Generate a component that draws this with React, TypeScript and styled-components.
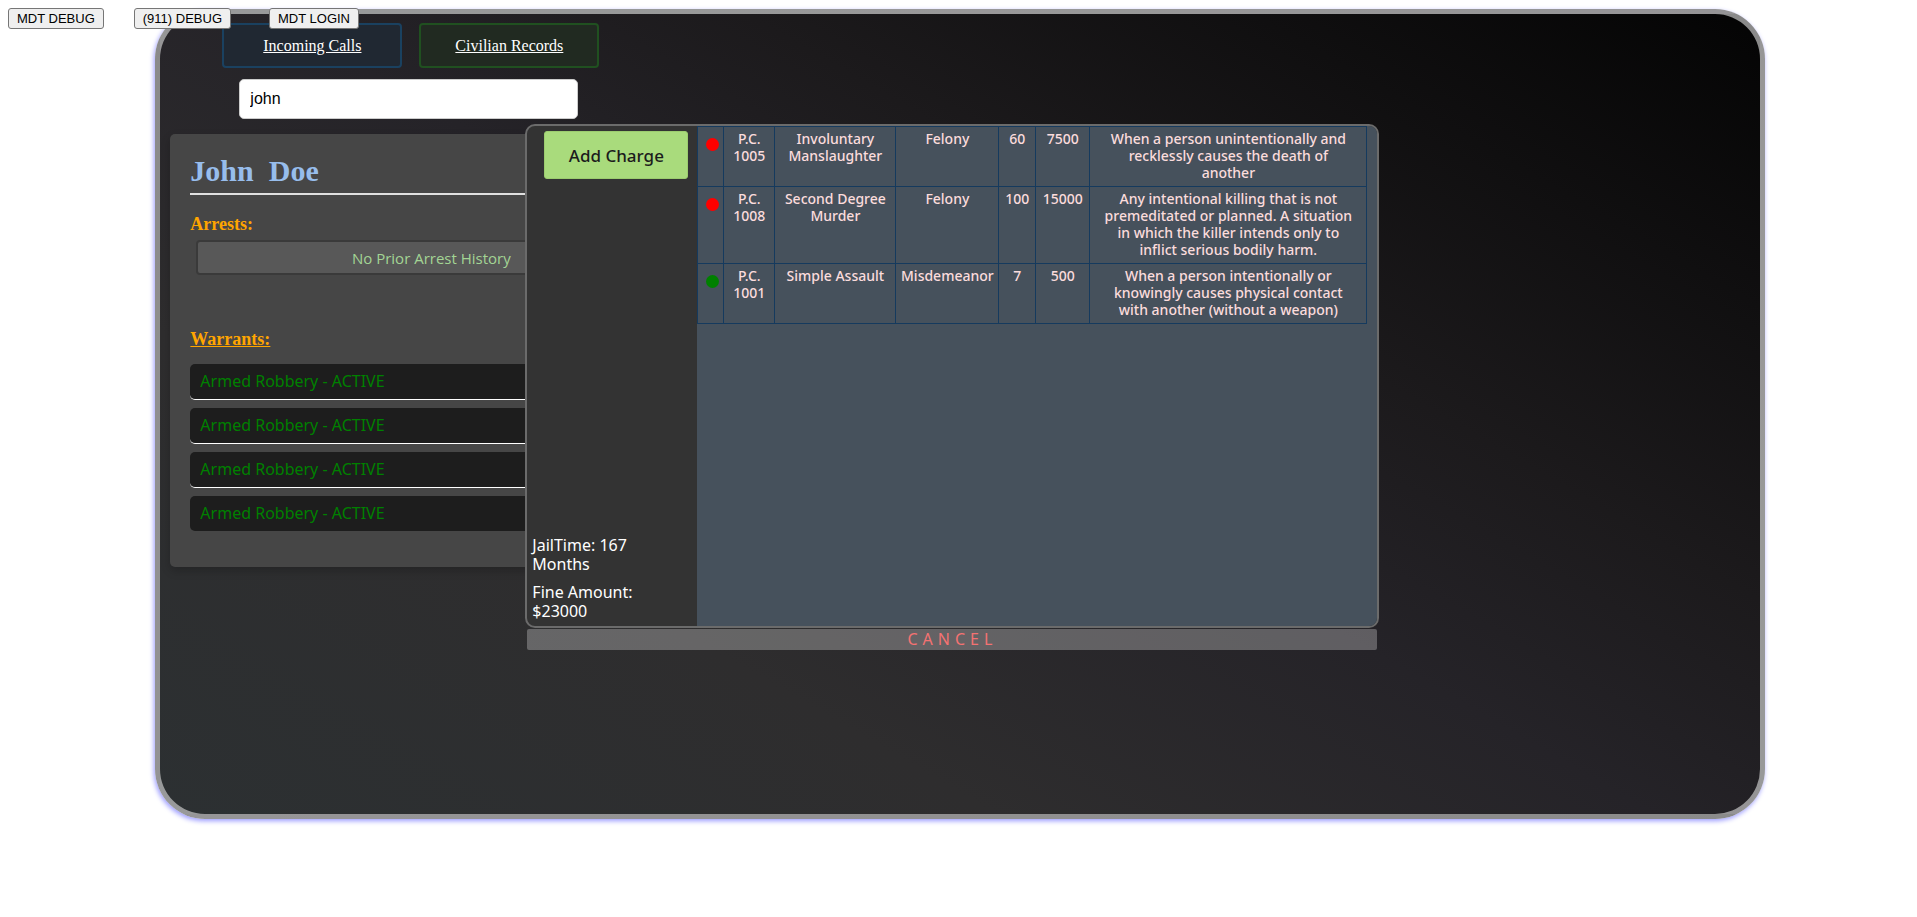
import React from 'react';
import styled, { createGlobalStyle } from 'styled-components';

const ui = `'Noto Sans', sans-serif`;
const serif = `'Liberation Serif', 'Times New Roman', serif`;
const arial = `'Liberation Sans', Arial, sans-serif`;

const GlobalStyle = createGlobalStyle`
  *, *::before, *::after { box-sizing: border-box; }
  html, body, #root { height: 100%; }
  body { margin: 0; background: #fff; font-family: ${serif}; }
`;

const Page = styled.div`
  position: relative;
  min-height: 100%;
  padding: 9px calc(8% - 1px) 0 calc(8% + 2px);
`;

const DebugBar = styled.nav`
  position: absolute;
  z-index: 3;
  top: 8px;
  left: 8px;
  display: flex;
  gap: 30px;
`;

const DebugButton = styled.button`
  height: 21px;
  padding: 0 8px;
  border: 1px solid #767676;
  border-radius: 3px;
  background: #efefef;
  color: #000;
  font: 13px/19px ${arial};
  white-space: nowrap;
  &:last-child { margin-left: 8px; }
`;

const Tablet = styled.main`
  position: relative;
  height: 810px;
  padding: 9px 10px;
  border: 5px solid rgba(211, 211, 211, 0.65);
  border-radius: 50px;
  background: linear-gradient(30deg, #2c3032 0%, #2e2d2e 28%, #252328 50%, #1c1a1c 66%, #040404 100%);
  box-shadow: -1px 2px 5px rgba(0, 0, 255, 0.4);
`;

const Tabs = styled.nav`
  display: flex;
  gap: 17px;
  margin-left: 52px;
`;

const Tab = styled.a<{ $border: string; $fill: string }>`
  width: 180px;
  height: 45px;
  padding-top: 12px;
  border: 2px solid ${p => p.$border};
  border-radius: 4px;
  background: ${p => p.$fill};
  color: #fff;
  font: 16px/18px ${serif};
  text-align: center;
  text-decoration: underline;
`;

const Search = styled.input`
  display: block;
  width: 339px;
  height: 40px;
  margin: 11px 0 15px 69px;
  padding: 0 10px;
  border: 1px solid #ccc;
  border-radius: 5px;
  background: #fff;
  color: #000;
  font: 16px ${arial};
`;

const Record = styled.section`
  width: 522px;
  padding: 20px 20px 36px;
  border-radius: 5px;
  background: #464646;
  box-shadow: 0 4px 10px rgba(0, 0, 0, 0.2);
`;

const Name = styled.h2`
  margin: 0 0 19px;
  padding-bottom: 5px;
  border-bottom: 2px solid #e0e0e0;
  color: #97bdec;
  font: bold 30px/34px ${serif};
  white-space: pre;
`;

const Heading = styled.h3<{ $underline?: boolean }>`
  margin: 0;
  color: orange;
  font: bold 18px/20px ${serif};
  text-decoration: ${p => (p.$underline ? 'underline' : 'none')};
`;

const NoHistory = styled.p`
  height: 35px;
  margin: 6px 6px 54px;
  padding: 6px 0;
  border: 2px solid #3a3a3a;
  border-radius: 4px;
  background: #585858;
  color: #a3d494;
  font: 15px/21px 'Segoe UI', 'Open Sans', sans-serif;
  text-align: center;
`;

const Warrants = styled.ul`
  display: flex;
  flex-direction: column;
  gap: 8px;
  margin: 15px 0 0;
  padding: 0;
  list-style: none;
`;

const Warrant = styled.li`
  padding: 7px 10px;
  border-bottom: 1px solid #fff;
  border-radius: 5px;
  background: #1d1d1d;
  color: green;
  font: 16px/21px ${ui};
  &:last-child { border-bottom: 0; }
`;

const Dialog = styled.div`
  position: absolute;
  z-index: 2;
  top: 110px;
  left: 365px;
  width: 854px;
`;

const Panel = styled.div`
  display: flex;
  height: 504px;
  border: 2px solid #6b6b6b;
  border-radius: 10px;
  background: #333;
  overflow: hidden;
`;

const Side = styled.aside`
  display: flex;
  flex-direction: column;
  align-items: center;
  width: 170px;
  padding: 5px;
`;

const AddButton = styled.button`
  width: 144px;
  height: 48px;
  margin-bottom: auto;
  margin-left: 8px;
  border: 1px solid #9ccc6f;
  border-radius: 3px;
  background: #a9db7c;
  color: #1c1c1c;
  font: 500 17px ${ui};
`;

const Total = styled.p`
  align-self: flex-start;
  width: 120px;
  margin: 9px 0 0;
  color: #fff;
  font: 16px/19px ${ui};
`;

const Charges = styled.div`
  flex: 1;
  padding-right: 10px;
  background: #46515c;
`;

const Table = styled.table`
  width: 100%;
  table-layout: fixed;
  border-collapse: collapse;
  color: #fbdcdc;
  font: 500 14px/17px ${ui};
  text-align: center;
`;

const Cell = styled.td<{ $wide?: boolean }>`
  padding: 3px ${p => (p.$wide ? 12 : 2)}px 5px;
  border: 1px solid #153a5e;
  vertical-align: top;
`;

const Dot = styled.span<{ $color: string }>`
  display: block;
  width: 13px;
  height: 13px;
  margin: 8px 2px 0 auto;
  border-radius: 50%;
  background: ${p => p.$color};
`;

const Cancel = styled.button`
  display: block;
  width: 850px;
  height: 21px;
  margin: 1px auto 0;
  padding: 0 0 1px;
  border: 0;
  border-radius: 2px;
  background: rgba(255, 255, 255, 0.27);
  color: #f47272;
  font: 16px/20px ${ui};
  letter-spacing: 5px;
`;

const charges = [
  { color: 'red', code: 'P.C. 1005', name: 'Involuntary Manslaughter', kind: 'Felony', time: 60, fine: 7500, text: 'When a person unintentionally and recklessly causes the death of another' },
  { color: 'red', code: 'P.C. 1008', name: 'Second Degree Murder', kind: 'Felony', time: 100, fine: 15000, text: 'Any intentional killing that is not premeditated or planned. A situation in which the killer intends only to inflict serious bodily harm.' },
  { color: 'green', code: 'P.C. 1001', name: 'Simple Assault', kind: 'Misdemeanor', time: 7, fine: 500, text: 'When a person intentionally or knowingly causes physical contact with another (without a weapon)' },
];

const columns = [26, 51, 121, 103, 37, 54];

export default function App() {
  return (
    <Page>
      <GlobalStyle />
      <DebugBar>
        <DebugButton>MDT DEBUG</DebugButton>
        <DebugButton>(911) DEBUG</DebugButton>
        <DebugButton>MDT LOGIN</DebugButton>
      </DebugBar>
      <Tablet>
        <Tabs>
          <Tab href="#calls" $border="#1a4160" $fill="#202832">Incoming Calls</Tab>
          <Tab href="#records" $border="#205020" $fill="#212a21">Civilian Records</Tab>
        </Tabs>
        <Search aria-label="Search civilians" defaultValue="john" />
        <Record>
          <Name>John  Doe</Name>
          <Heading>Arrests:</Heading>
          <NoHistory>No Prior Arrest History</NoHistory>
          <Heading $underline>Warrants:</Heading>
          <Warrants>
            {[1, 2, 3, 4].map(n => <Warrant key={n}>Armed Robbery - ACTIVE</Warrant>)}
          </Warrants>
        </Record>
        <Dialog role="dialog" aria-label="Charges">
          <Panel>
            <Side>
              <AddButton>Add Charge</AddButton>
              <Total>JailTime: 167 Months</Total>
              <Total>Fine Amount: $23000</Total>
            </Side>
            <Charges>
              <Table>
                <colgroup>
                  {columns.map((w, i) => <col key={i} width={w} />)}
                  <col />
                </colgroup>
                <tbody>
                  {charges.map(c => (
                    <tr key={c.code}>
                      <Cell><Dot $color={c.color} /></Cell>
                      <Cell>{c.code}</Cell>
                      <Cell>{c.name}</Cell>
                      <Cell>{c.kind}</Cell>
                      <Cell>{c.time}</Cell>
                      <Cell>{c.fine}</Cell>
                      <Cell $wide>{c.text}</Cell>
                    </tr>
                  ))}
                </tbody>
              </Table>
            </Charges>
          </Panel>
          <Cancel>CANCEL</Cancel>
        </Dialog>
      </Tablet>
    </Page>
  );
}
